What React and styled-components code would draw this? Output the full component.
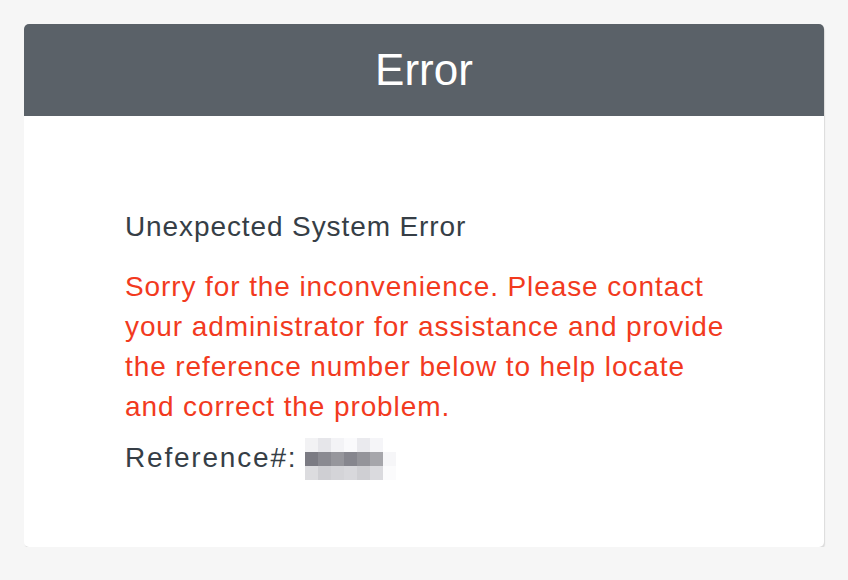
import styled, { createGlobalStyle } from "styled-components";

const GlobalStyle = createGlobalStyle`
  html, body {
    margin: 0;
    padding: 0;
    background: #f6f6f6;
  }
  body {
    font-family: "Liberation Sans", Arial, sans-serif;
  }
`;

const Page = styled.div`
  padding: 24px 24px 0 24px;
  width: 800px;
`;

const Card = styled.div`
  background: #ffffff;
  border-radius: 5px;
  box-shadow: 1px 2px 1px #dcdcdc;
  overflow: hidden;
`;

const CardHeader = styled.div`
  height: 92px;
  background: #5a6168;
  display: flex;
  align-items: center;
  justify-content: center;
`;

const Title = styled.h1`
  margin: 0;
  color: #ffffff;
  font-size: 44px;
  font-weight: 400;
  line-height: 48px;
`;

const CardBody = styled.div`
  padding: 91px 100px 67px 101px;
  font-size: 28px;
  line-height: 40px;
  letter-spacing: 0.9px;
`;

const Heading = styled.div`
  color: #363e46;
`;

const Message = styled.p`
  margin: 20px 0 0 0;
  color: #f23a1e;
  white-space: nowrap;
`;

const RefLine = styled.div`
  margin-top: 9px;
  color: #363e46;
  letter-spacing: 1.8px;
  display: flex;
  align-items: center;
  gap: 8px;
`;

const Blur = styled.div`
  display: grid;
  grid-template-columns: repeat(7, 13px);
  grid-template-rows: repeat(3, 14px);
  margin-top: 2px;
`;

const Cell = styled.span`
  background: ${(p) => p.$c};
`;

const cells = [
  "#f2f2f4", "#e6e6ea", "#f3f3f6", "#fafafc", "#eaeaee", "#f5f5f8", "#ffffff",
  "#7b7b83", "#8a8a91", "#96969c", "#86868e", "#94949a", "#a6a6ab", "#f6f6f8",
  "#dcdcdf", "#cfcfd3", "#d4d4d8", "#d8d8dc", "#cfcfd3", "#dadade", "#fbfbfc",
];

const App = () => {
  return (
    <>
      <GlobalStyle />
      <Page>
        <Card>
          <CardHeader>
            <Title>Error</Title>
          </CardHeader>
          <CardBody>
            <Heading>Unexpected System Error</Heading>
            <Message>
              Sorry for the inconvenience. Please contact
              <br />
              your administrator for assistance and provide
              <br />
              the reference number below to help locate
              <br />
              and correct the problem.
            </Message>
            <RefLine>
              Reference#:
              <Blur>
                {cells.map((c, i) => (
                  <Cell key={i} $c={c} />
                ))}
              </Blur>
            </RefLine>
          </CardBody>
        </Card>
      </Page>
    </>
  );
};

export default App;
